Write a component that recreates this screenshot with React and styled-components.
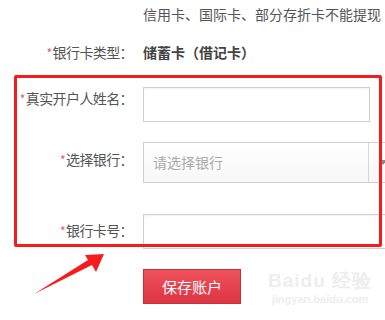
import React from 'react';
import styled, { createGlobalStyle } from 'styled-components';

const GlobalStyle = createGlobalStyle`
  html, body {
    margin: 0;
    padding: 0;
    background: #fff;
    overflow: hidden;
  }
  body {
    font-family: "Noto Sans CJK SC", "Noto Sans", sans-serif;
    font-size: 14px;
    color: #555;
  }
`;

const Page = styled.div`
  position: relative;
  width: 385px;
  height: 320px;
  padding-top: 6px;
  box-sizing: border-box;
`;

const Note = styled.div`
  margin-left: 143px;
  height: 16px;
  line-height: 16px;
  font-size: 14px;
  color: #555;
  white-space: nowrap;
`;

const Row = styled.div`
  display: grid;
  grid-template-columns: 133px auto;
  column-gap: 10px;
  align-items: start;
  margin-top: ${(p) => p.$gap}px;
`;

const Label = styled.div`
  text-align: right;
  line-height: 20px;
  padding-top: ${(p) => p.$pad || 0}px;
  white-space: nowrap;
  letter-spacing: -0.6px;
  color: #555;
`;

const Star = styled.span`
  color: #e85a5a;
  font-size: 12px;
  margin-right: 1px;
`;

const Value = styled.div`
  line-height: 20px;
  font-weight: 700;
  color: #444;
`;

const Input = styled.div`
  width: ${(p) => p.$w}px;
  height: ${(p) => p.$h}px;
  box-sizing: border-box;
  border: 1px solid #cfcfcf;
  background: #fff;
  box-shadow: inset 0 1px 2px rgba(0, 0, 0, 0.06);
`;

const Select = styled.div`
  display: flex;
  width: 260px;
  height: 41px;
  box-sizing: border-box;
  border: 1px solid #cfcfcf;
  background: linear-gradient(#fff, #f8f8f8);
`;

const SelectText = styled.div`
  width: 225px;
  border-right: 1px solid #d6d6d6;
  padding-left: 9px;
  box-sizing: border-box;
  line-height: 39px;
  color: #aaa;
`;

const SelectArrow = styled.div`
  flex: 1;
  display: flex;
  align-items: center;
  padding-left: 10px;

  &::after {
    content: '';
    border-left: 4px solid transparent;
    border-right: 4px solid transparent;
    border-top: 5px solid #888;
  }
`;

const SaveButton = styled.button`
  width: 98px;
  height: 35px;
  padding: 0;
  border: 1px solid #c4303c;
  background: linear-gradient(#f0525e, #dc3442);
  color: #fff;
  font-family: inherit;
  font-size: 15px;
  line-height: 33px;
  cursor: pointer;
`;

const Highlight = styled.div`
  position: absolute;
  left: 14px;
  top: 75px;
  width: 368px;
  height: 172px;
  box-sizing: border-box;
  border: 3px solid #f61c1c;
  border-radius: 2px;
  pointer-events: none;
`;

const Arrow = styled.svg`
  position: absolute;
  left: 0;
  top: 0;
  pointer-events: none;
`;

const Watermark = styled.div`
  position: absolute;
  left: 268px;
  top: 270px;
  color: #eeeeee;
  text-align: center;
  pointer-events: none;
`;

const MarkTop = styled.div`
  font-family: "Liberation Sans", sans-serif;
  font-weight: 700;
  font-size: 19px;
  line-height: 22px;
  letter-spacing: 1px;
`;

const MarkBottom = styled.div`
  font-family: "Liberation Sans", sans-serif;
  font-weight: 700;
  font-size: 11px;
  line-height: 14px;
`;

export default function App() {
  return (
    <Page>
      <GlobalStyle />
      <Note>信用卡、国际卡、部分存折卡不能提现</Note>

      <Row $gap={20}>
        <Label>
          <Star>*</Star>银行卡类型：
        </Label>
        <Value>储蓄卡（借记卡）</Value>
      </Row>

      <Row $gap={24}>
        <Label $pad={1}>
          <Star>*</Star>真实开户人姓名：
        </Label>
        <Input $w={227} $h={35} />
      </Row>

      <Row $gap={20}>
        <Label $pad={7}>
          <Star>*</Star>选择银行：
        </Label>
        <Select>
          <SelectText>请选择银行</SelectText>
          <SelectArrow />
        </Select>
      </Row>

      <Row $gap={31}>
        <Label $pad={6}>
          <Star>*</Star>银行卡号：
        </Label>
        <Input $w={260} $h={35} />
      </Row>

      <Row $gap={20}>
        <div />
        <SaveButton>保存账户</SaveButton>
      </Row>

      <Watermark>
        <MarkTop>Baidu 经验</MarkTop>
        <MarkBottom>jingyan.baidu.com</MarkBottom>
      </Watermark>

      <Highlight />

      <Arrow width="385" height="320" viewBox="0 0 385 320">
        <polygon
          points="34,294 88,260 85,255 104,254 96,272 92,265"
          fill="#f61c1c"
        />
      </Arrow>
    </Page>
  );
}
